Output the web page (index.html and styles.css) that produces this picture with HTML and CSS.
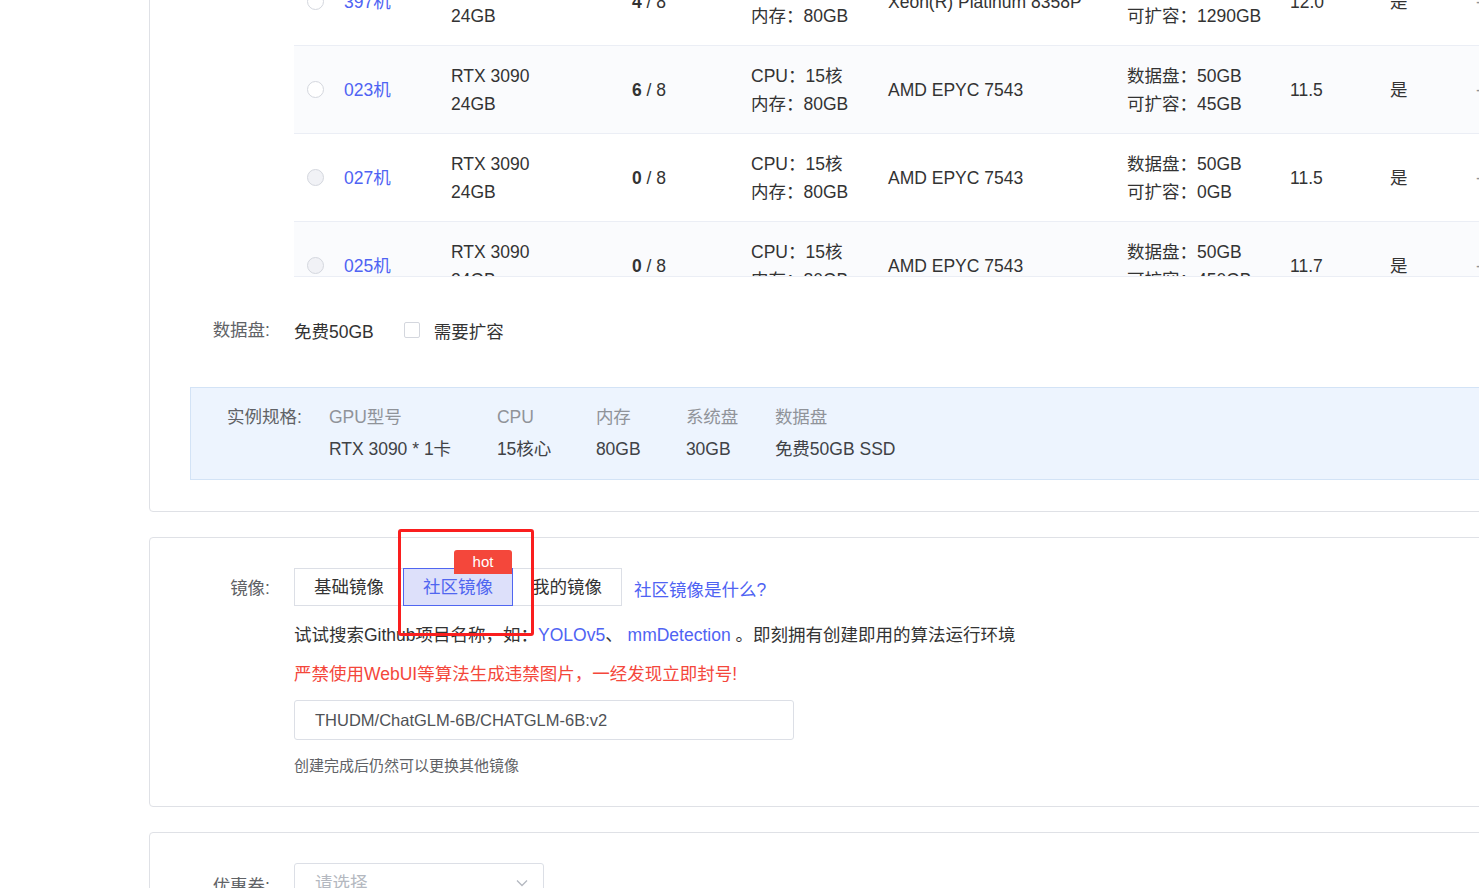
FILE: index.html
```html
<!DOCTYPE html>
<html lang="zh-CN">
<head>
<meta charset="utf-8">
<title>创建实例</title>
<link rel="stylesheet" href="styles.css">
</head>
<body>
<div class="page">
  <section class="card card-config">
    <div class="table-wrap">
      <div class="table">
        <div class="row">
          <div class="cell"><span class="radio"></span></div>
          <div class="cell"><a class="link">397机</a></div>
          <div class="cell two"><span>RTX 3090</span><span>24GB</span></div>
          <div class="cell"><b>4</b>&nbsp;/ 8</div>
          <div class="cell two"><span>CPU：16核</span><span>内存：80GB</span></div>
          <div class="cell">Xeon(R) Platinum 8358P</div>
          <div class="cell two"><span>数据盘：50GB</span><span>可扩容：1290GB</span></div>
          <div class="cell">12.0</div>
          <div class="cell">是</div>
          <div class="cell dash">-</div>
        </div>
        <div class="row striped">
          <div class="cell"><span class="radio"></span></div>
          <div class="cell"><a class="link">023机</a></div>
          <div class="cell two"><span>RTX 3090</span><span>24GB</span></div>
          <div class="cell"><b>6</b>&nbsp;/ 8</div>
          <div class="cell two"><span>CPU：15核</span><span>内存：80GB</span></div>
          <div class="cell">AMD EPYC 7543</div>
          <div class="cell two"><span>数据盘：50GB</span><span>可扩容：45GB</span></div>
          <div class="cell">11.5</div>
          <div class="cell">是</div>
          <div class="cell dash">-</div>
        </div>
        <div class="row">
          <div class="cell"><span class="radio disabled"></span></div>
          <div class="cell"><a class="link">027机</a></div>
          <div class="cell two"><span>RTX 3090</span><span>24GB</span></div>
          <div class="cell"><b>0</b>&nbsp;/ 8</div>
          <div class="cell two"><span>CPU：15核</span><span>内存：80GB</span></div>
          <div class="cell">AMD EPYC 7543</div>
          <div class="cell two"><span>数据盘：50GB</span><span>可扩容：0GB</span></div>
          <div class="cell">11.5</div>
          <div class="cell">是</div>
          <div class="cell dash">-</div>
        </div>
        <div class="row striped">
          <div class="cell"><span class="radio disabled"></span></div>
          <div class="cell"><a class="link">025机</a></div>
          <div class="cell two"><span>RTX 3090</span><span>24GB</span></div>
          <div class="cell"><b>0</b>&nbsp;/ 8</div>
          <div class="cell two"><span>CPU：15核</span><span>内存：80GB</span></div>
          <div class="cell">AMD EPYC 7543</div>
          <div class="cell two"><span>数据盘：50GB</span><span>可扩容：450GB</span></div>
          <div class="cell">11.7</div>
          <div class="cell">是</div>
          <div class="cell dash">-</div>
        </div>
      </div>
    </div>

    <div class="form-row disk-row">
      <div class="form-label">数据盘:</div>
      <div class="form-content inline">
        <span class="free">免费50GB</span>
        <span class="checkbox"></span>
        <span class="check-label">需要扩容</span>
      </div>
    </div>

    <div class="spec-box">
      <div class="spec-label">实例规格:</div>
      <div class="spec-col col-gpu"><span class="spec-h">GPU型号</span><span class="spec-v">RTX 3090 * 1卡</span></div>
      <div class="spec-col col-cpu"><span class="spec-h">CPU</span><span class="spec-v">15核心</span></div>
      <div class="spec-col col-mem"><span class="spec-h">内存</span><span class="spec-v">80GB</span></div>
      <div class="spec-col col-sys"><span class="spec-h">系统盘</span><span class="spec-v">30GB</span></div>
      <div class="spec-col"><span class="spec-h">数据盘</span><span class="spec-v">免费50GB SSD</span></div>
    </div>
  </section>

  <section class="card card-image">
    <div class="form-row">
      <div class="form-label tall">镜像:</div>
      <div class="form-content">
        <div class="btn-row">
          <div class="btn-group">
            <span class="btn">基础镜像</span>
            <span class="btn active">社区镜像<span class="hot">hot</span></span>
            <span class="btn">我的镜像</span>
          </div>
          <a class="link what">社区镜像是什么?</a>
        </div>
        <p class="tip">试试搜索Github项目名称，如：<a class="link">YOLOv5</a>、 <a class="link">mmDetection</a> 。即刻拥有创建即用的算法运行环境</p>
        <p class="warn">严禁使用WebUI等算法生成违禁图片，一经发现立即封号!</p>
        <div class="input">THUDM/ChatGLM-6B/CHATGLM-6B:v2</div>
        <p class="help">创建完成后仍然可以更换其他镜像</p>
      </div>
    </div>
    <div class="annot"></div>
  </section>

  <section class="card card-coupon">
    <div class="form-row">
      <div class="form-label select-label">优惠券:</div>
      <div class="form-content">
        <div class="select">
          <span class="placeholder">请选择</span>
          <svg class="chev" width="14" height="14" viewBox="0 0 14 14"><path d="M2 4.5 L7 9.5 L12 4.5" fill="none" stroke="#b4b8c0" stroke-width="1.3"/></svg>
        </div>
      </div>
    </div>
  </section>
</div>
</body>
</html>
```

FILE: styles.css
```css
html, body {
  margin: 0;
  padding: 0;
  background: #ffffff;
  overflow: hidden;
}
body {
  font-family: "Liberation Sans", "Noto Sans CJK SC", sans-serif;
  font-size: 17.5px;
  color: #333333;
}
.page {
  padding-left: 149px;
}
.card {
  position: relative;
  border: 1px solid #dfe1e6;
  border-radius: 4px;
  margin-right: -40px;
  background: #fff;
}
.card-config {
  margin-top: -100px;
  padding: 57px 0 31px;
}
.card-image {
  margin-top: 25px;
  padding: 30px 0 30px;
}
.card-coupon {
  margin-top: 25px;
  padding: 30px 0 40px;
}

/* table */
.table-wrap {
  margin-left: 144px;
  height: 318px;
  overflow: hidden;
  border-bottom: 1px solid #ebeef5;
}
.row {
  display: grid;
  grid-template-columns: 50px 107px 181px 119px 137px 239px 163px 100px 86px 100px;
  height: 87px;
  border-bottom: 1px solid #ebeef5;
  align-items: center;
  line-height: 28px;
  white-space: nowrap;
}
.row.striped {
  background: #fafbfd;
}
.cell {
  display: flex;
  align-items: center;
}
.cell.two {
  flex-direction: column;
  align-items: flex-start;
}
.cell b {
  font-weight: bold;
}
.cell.dash {
  color: #909399;
}
.radio {
  display: inline-block;
  width: 17px;
  height: 17px;
  margin-left: 13px;
  border: 1px solid #d4d7de;
  border-radius: 50%;
  background: #fff;
  box-sizing: border-box;
}
.radio.disabled {
  background: #f1f2f6;
}
.link {
  color: #4f63f3;
  text-decoration: none;
}

/* form rows */
.form-row {
  display: flex;
  align-items: flex-start;
}
.form-label {
  width: 120px;
  margin-right: 24px;
  text-align: right;
  color: #606266;
  line-height: 40px;
  flex: none;
}
.form-label.tall {
  line-height: 38px;
  padding-top: 1px;
}
.form-content.inline {
  display: flex;
  align-items: center;
  height: 40px;
}
.disk-row {
  margin-top: 33px;
}
.free {
  color: #333;
}
.checkbox {
  display: inline-block;
  width: 16px;
  height: 16px;
  box-sizing: border-box;
  border: 1px solid #d4d7de;
  border-radius: 2px;
  margin-left: 30px;
  background: #fff;
}
.check-label {
  margin-left: 14px;
  color: #333;
}

/* spec box */
.spec-box {
  margin: 37px 0 0 40px;
  background: #edf4fe;
  border: 1px solid #d3e3f6;
  padding: 13px 0 14px 36px;
  display: flex;
  line-height: 32px;
}
.spec-label {
  color: #606266;
  margin-right: 27px;
}
.spec-col {
  display: flex;
  flex-direction: column;
  white-space: nowrap;
}
.col-gpu { width: 168px; }
.col-cpu { width: 99px; }
.col-mem { width: 90px; }
.col-sys { width: 89px; }
.spec-h {
  color: #909399;
}
.spec-v {
  color: #404246;
}

/* image card */
.btn-row {
  display: flex;
  align-items: center;
  height: 38px;
}
.btn-group {
  display: flex;
}
.btn {
  position: relative;
  height: 38px;
  line-height: 37px;
  padding: 0 19px;
  box-sizing: border-box;
  border: 1px solid #dcdfe6;
  background: #fff;
  color: #333;
  white-space: nowrap;
}
.btn + .btn {
  margin-left: -1px;
}
.btn.active {
  background: #dde0fa;
  border-color: #5066f0;
  color: #5066f0;
  z-index: 1;
}
.hot {
  position: absolute;
  right: 0;
  top: -19px;
  width: 58px;
  height: 24px;
  line-height: 24px;
  text-align: center;
  background: #f4473b;
  color: #fff;
  font-size: 15px;
  border-radius: 3px 3px 0 0;
}
.what {
  margin-left: 12px;
  padding-top: 2px;
}
.tip {
  margin: 15px 0 0;
  line-height: 28px;
  color: #333;
  white-space: nowrap;
}
.warn {
  margin: 11px 0 0;
  line-height: 28px;
  color: #f4473b;
}
.input {
  margin-top: 12px;
  width: 500px;
  height: 40px;
  box-sizing: border-box;
  border: 1px solid #dcdfe6;
  border-radius: 3px;
  padding-left: 20px;
  line-height: 38px;
  color: #505256;
  font-size: 16.5px;
}
.help {
  margin: 16px 0 0;
  line-height: 20px;
  font-size: 15px;
  color: #606266;
}
.annot {
  position: absolute;
  left: 248px;
  top: -9px;
  width: 136px;
  height: 107px;
  box-sizing: border-box;
  border: 3px solid #fa1e1e;
  border-radius: 3px;
  z-index: 5;
}

/* coupon */
.select {
  position: relative;
  width: 250px;
  height: 40px;
  box-sizing: border-box;
  border: 1px solid #dcdfe6;
  border-radius: 3px;
  padding-left: 20px;
  line-height: 38px;
  display: flex;
  align-items: center;
  justify-content: space-between;
  padding-right: 14px;
}
.placeholder {
  color: #b4b8c0;
}
.select-label {
  line-height: 40px;
  padding-top: 3px;
}
```
